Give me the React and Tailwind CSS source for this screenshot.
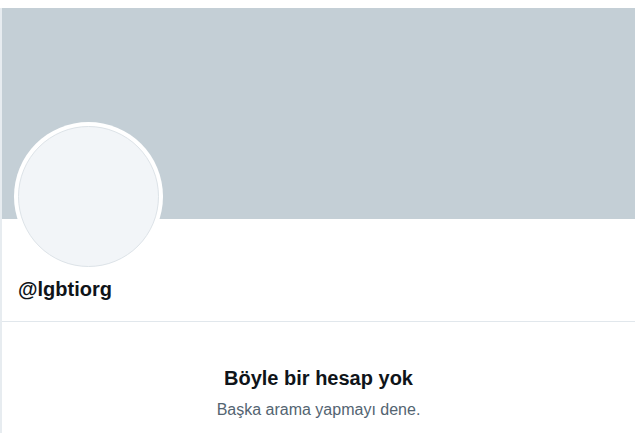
export default function App() {
  return (
    <div className="w-[635px] h-[433px] bg-white pt-2 overflow-hidden" style={{ fontFamily: '"Liberation Sans", Arial, sans-serif' }}>
      <div className="h-full border-l-2 border-[#e7ecf0]">
        {/* Banner */}
        <div className="h-[211px] bg-[#c4cfd6]" />

        {/* Avatar + handle */}
        <div className="px-3 -mt-[97px]">
          <div className="w-[149px] h-[149px] rounded-full bg-white p-[4px]">
            <div className="w-full h-full rounded-full bg-[#f2f5f8] border border-[#dde3e8]" />
          </div>
          <div className="mt-[6px] pl-[4px] text-[20px] font-bold leading-[24px] text-[#0f1419]">@lgbtiorg</div>
        </div>

        <div className="mt-[20px] border-t border-[#e1e7ec]" />

        {/* Empty state */}
        <div className="flex flex-col items-center pt-[44px]">
          <div className="text-[20px] font-bold leading-[24px] text-[#0f1419]">Böyle bir hesap yok</div>
          <div className="mt-[10px] text-[16px] leading-[20px] text-[#536471]">Başka arama yapmayı dene.</div>
        </div>
      </div>
    </div>
  );
}
